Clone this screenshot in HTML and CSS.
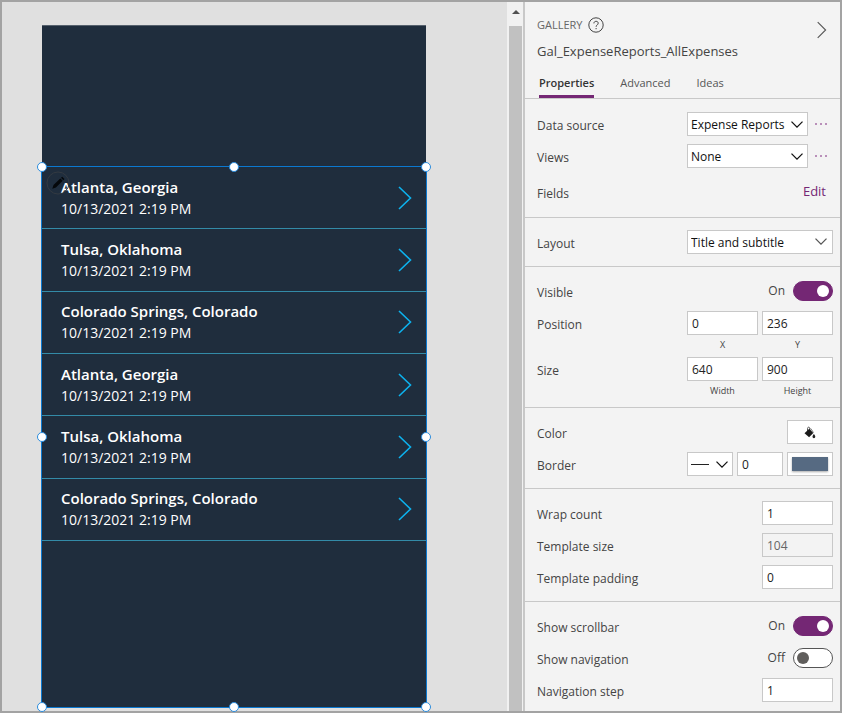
FILE: index.html
```html
<!DOCTYPE html>
<html lang="en">
<head>
<meta charset="utf-8">
<meta name="viewport" content="width=device-width, initial-scale=1">
<title>Gal_ExpenseReports_AllExpenses</title>
<link rel="stylesheet" href="styles.css">
</head>
<body>
<svg class="defs" aria-hidden="true">
  <symbol id="next" viewBox="0 0 14 24"><path d="M1 1l11.500 11L1 23" fill="none" stroke="currentColor" stroke-width="1.600"/></symbol>
  <symbol id="down" viewBox="0 0 12 7"><path d="M.5 .6L6 6.1 11.500 .6" fill="none" stroke="currentColor" stroke-width="1.3"/></symbol>
</svg>
<div class="studio">
  <main class="canvas">
    <div class="screen">
      <div class="screen-header"></div>
      <section class="gallery" aria-label="Expense reports">
        <ul class="items">
          <li class="item"><div><div class="title">Atlanta, Georgia</div><div class="subtitle">10/13/2021 2:19 PM</div></div><svg class="next"><use href="#next"/></svg></li>
          <li class="item"><div><div class="title">Tulsa, Oklahoma</div><div class="subtitle">10/13/2021 2:19 PM</div></div><svg class="next"><use href="#next"/></svg></li>
          <li class="item"><div><div class="title">Colorado Springs, Colorado</div><div class="subtitle">10/13/2021 2:19 PM</div></div><svg class="next"><use href="#next"/></svg></li>
          <li class="item"><div><div class="title">Atlanta, Georgia</div><div class="subtitle">10/13/2021 2:19 PM</div></div><svg class="next"><use href="#next"/></svg></li>
          <li class="item"><div><div class="title">Tulsa, Oklahoma</div><div class="subtitle">10/13/2021 2:19 PM</div></div><svg class="next"><use href="#next"/></svg></li>
          <li class="item"><div><div class="title">Colorado Springs, Colorado</div><div class="subtitle">10/13/2021 2:19 PM</div></div><svg class="next"><use href="#next"/></svg></li>
        </ul>
        <svg class="pencil" viewBox="0 0 24 24" aria-hidden="true">
          <circle cx="12" cy="12" r="11" fill="none" stroke="#333a42" stroke-width="1"/>
          <path d="M6.300 17.700l1.200-3.700 6.800-6.600 2.400 2.400-6.800 6.700zM15 6.800l1.200-1 2.300 2.200-1.100 1.200z" fill="#05080b"/>
        </svg>
        <i class="handle top left"></i><i class="handle top center"></i><i class="handle top right"></i>
        <i class="handle middle left"></i><i class="handle middle right"></i>
        <i class="handle bottom left"></i><i class="handle bottom center"></i><i class="handle bottom right"></i>
      </section>
    </div>
  </main>
  <div class="scrollbar" aria-hidden="true">
    <svg class="scroll-up" viewBox="0 0 8 4"><path d="M0 4l4-4 4 4z" fill="#505050"/></svg>
    <div class="thumb"></div>
  </div>
  <aside class="panel">
    <header class="panel-header">
      <div class="heading">
        <div>
          <div class="kind">GALLERY
            <button class="plain" aria-label="Help"><svg class="help" viewBox="0 0 16 16" fill="none" stroke="#444"><circle cx="8" cy="8" r="7.200"/><path d="M5.900 6.400c0-1.300.9-2.100 2.200-2.100s2.100.8 2.100 1.900c0 1.700-2.100 1.800-2.100 3.600"/><path d="M8.100 11v1.200"/></svg></button>
          </div>
          <h1 class="name">Gal_ExpenseReports_AllExpenses</h1>
        </div>
        <button class="plain collapse" aria-label="Collapse"><svg viewBox="0 0 10 18"><path d="M.7 1.200L8.600 9 .7 16.800" fill="none" stroke="#555" stroke-width="1.100"/></svg></button>
      </div>
      <nav class="tabs">
        <button class="tab active">Properties</button>
        <button class="tab">Advanced</button>
        <button class="tab">Ideas</button>
      </nav>
    </header>

    <section class="group first">
      <div class="row"><label for="source">Data source</label>
        <div class="controls"><span class="select"><select id="source"><option>Expense Reports</option></select><svg class="down"><use href="#down"/></svg></span>
        <button class="plain more" aria-label="Data source options"><svg viewBox="0 0 12 2"><path d="M0 0h2v2H0zM5 0h2v2H5zM10 0h2v2h-2z" fill="#b98fb9"/></svg></button></div></div>
      <div class="row"><label for="views">Views</label>
        <div class="controls"><span class="select"><select id="views"><option>None</option></select><svg class="down"><use href="#down"/></svg></span>
        <button class="plain more" aria-label="View options"><svg viewBox="0 0 12 2"><path d="M0 0h2v2H0zM5 0h2v2H5zM10 0h2v2h-2z" fill="#b98fb9"/></svg></button></div></div>
      <div class="row tall"><span class="label">Fields</span><a class="edit" href="#fields">Edit</a></div>
    </section>

    <section class="group">
      <div class="row"><label for="layout">Layout</label>
        <div class="controls"><span class="select light"><select id="layout"><option>Title and subtitle</option></select><svg class="down"><use href="#down"/></svg></span></div></div>
    </section>

    <section class="group">
      <div class="row"><label for="visible">Visible</label>
        <div class="controls end"><span class="state">On</span><input class="toggle" id="visible" type="checkbox" role="switch" checked></div></div>
      <div class="row"><span class="label">Position</span>
        <div class="controls">
          <div class="field"><input id="x" type="text" value="0"><label class="caption" for="x">X</label></div>
          <div class="field"><input id="y" type="text" value="236"><label class="caption" for="y">Y</label></div>
        </div></div>
      <div class="row"><span class="label">Size</span>
        <div class="controls">
          <div class="field"><input id="width" type="text" value="640"><label class="caption" for="width">Width</label></div>
          <div class="field"><input id="height" type="text" value="900"><label class="caption" for="height">Height</label></div>
        </div></div>
    </section>

    <section class="group">
      <div class="row"><span class="label">Color</span>
        <div class="controls end"><button class="box third" aria-label="Fill color">
          <svg class="bucket" viewBox="0 0 12 13"><path d="M3.500 5.200V2.400C3.500 1 5.500 .6 5.700 2.200v3" fill="none" stroke="#555"/><path d="M.5 7.300L5.300 2.800l4 4.200-4.200 4.200z" fill="#1b1b1b"/><path d="M6.600 2.400l2.900 4.200" stroke="#777" fill="none"/><path d="M9.900 8c.9 1.300 1.400 2 1.400 2.800a1.400 1.400 0 0 1-2.800 0c0-.8.5-1.500 1.400-2.800z" fill="#222"/></svg>
        </button></div></div>
      <div class="row"><label for="border-width">Border</label>
        <div class="controls">
          <button class="box third style" aria-label="Border style"><span class="line"></span><svg class="chevron"><use href="#down"/></svg></button>
          <input class="third" id="border-width" type="text" value="0">
          <button class="box third" aria-label="Border color"><span class="swatch"></span></button>
        </div></div>
    </section>

    <section class="group">
      <div class="row"><label for="wrap">Wrap count</label><div class="controls end"><input class="half" id="wrap" type="text" value="1"></div></div>
      <div class="row"><label for="tsize">Template size</label><div class="controls end"><input class="half" id="tsize" type="text" value="104" disabled></div></div>
      <div class="row"><label for="tpad">Template padding</label><div class="controls end"><input class="half" id="tpad" type="text" value="0"></div></div>
    </section>

    <section class="group">
      <div class="row"><label for="scroll">Show scrollbar</label>
        <div class="controls end"><span class="state">On</span><input class="toggle" id="scroll" type="checkbox" role="switch" checked></div></div>
      <div class="row"><label for="nav">Show navigation</label>
        <div class="controls end"><span class="state">Off</span><input class="toggle" id="nav" type="checkbox" role="switch"></div></div>
      <div class="row"><label for="step">Navigation step</label><div class="controls end"><input class="half" id="step" type="text" value="1"></div></div>
    </section>
  </aside>
</div>
</body>
</html>
```
FILE: styles.css
```css
* { box-sizing: border-box; }
body {
  margin: 0;
  font-family: "Open Sans", "Noto Sans", sans-serif;
  font-size: 12px;
  line-height: 16px;
  color: #444;
}
button, input, select { font: inherit; color: #222; margin: 0; }
.defs { display: none; }

.studio {
  display: flex;
  min-height: 100vh;
  border: 2px solid #a3a3a3;
  background: #e0e0e0;
}

/* Canvas */
.canvas { flex: 1; display: flex; min-width: 0; padding: 23px 81px 3px 40px; }
.screen {
  flex: 1;
  display: flex;
  flex-direction: column;
  background: #1f2d3d;
  border-top: 1px solid #56616d;
}
.screen-header { height: 140px; }
.gallery {
  position: relative;
  flex: 1;
  margin: 0 -1px 0 -1px;
  border: 1px solid #0b78d0;
}
.items {
  display: grid;
  grid-auto-rows: 1fr;
  height: 374px;
  margin: 0;
  padding: 0;
  list-style: none;
}
.item {
  display: flex;
  align-items: center;
  justify-content: space-between;
  padding: 0 14px 0 19px;
  border-bottom: 1px solid #338ba8;
  color: #fff;
}
.title { font-size: 15px; line-height: 22px; font-weight: 600; }
.subtitle { font-size: 14px; line-height: 22px; }
.next { width: 14px; height: 24px; color: #0db2ee; }
.pencil { position: absolute; top: 4px; left: 4px; width: 24px; height: 24px; }
.handle {
  position: absolute;
  width: 10px;
  height: 10px;
  border: 1px solid #2a8bdc;
  border-radius: 50%;
  background: #fff;
}
.handle.top { top: -5px; }
.handle.middle { top: calc(50% - 5px); }
.handle.bottom { bottom: -5px; }
.handle.left { left: -5px; }
.handle.center { left: calc(50% - 5px); }
.handle.right { right: -5px; }

/* Scrollbar */
.scrollbar {
  display: flex;
  flex-direction: column;
  align-items: center;
  width: 16px;
  padding: 0 1px 0 2px;
  background: #f1f1f1;
}
.scroll-up { width: 8px; height: 4px; margin: 8px 0 12px; }
.thumb { flex: 1; width: 100%; background: #c1c1c1; }

/* Property panel */
.panel { width: 317px; border-left: 2px solid #c8c8c8; background: #f3f3f3; }
.panel-header { border-bottom: 1px solid #c8c8c8; padding: 13px 12px 0; }
.heading { display: flex; justify-content: space-between; align-items: flex-start; }
.kind { display: flex; align-items: center; gap: 5px; height: 20px; font-size: 11px; color: #666; }
.plain { display: block; padding: 0; border: 0; background: none; }
.plain svg { display: block; }
.help { width: 16px; height: 16px; }
.name { margin: 5px 0 0; font-size: 13px; line-height: 22px; font-weight: 400; color: #444; }
.collapse { margin: 6px 1px 0 0; }
.collapse svg { width: 10px; height: 18px; }
.tabs { display: flex; gap: 26px; margin-top: 12px; padding-left: 2px; }
.tab {
  height: 24px;
  padding: 0 0 4px;
  border: 0;
  border-bottom: 3px solid transparent;
  background: none;
  font-size: 11px;
  line-height: 16px;
  color: #555;
}
.tab.active { border-color: #742774; font-weight: 600; color: #333; }

.group {
  display: flex;
  flex-direction: column;
  gap: 8px;
  padding: 12px 7px 12px 12px;
  border-bottom: 1px solid #c8c8c8;
}
.group.first { padding-top: 13px; }
.group:last-child { border-bottom: 0; padding-bottom: 7px; }
.row { display: flex; justify-content: space-between; align-items: flex-start; min-height: 24px; }
.row > label, .row > .label { padding-top: 6px; }
.row.tall { min-height: 29px; align-items: center; }
.edit { margin-right: 7px; font-size: 13px; color: #742774; text-decoration: none; }
.controls { display: flex; align-items: center; gap: 4px; width: 146px; }
.controls.end { justify-content: flex-end; }

input[type="text"], select, .box {
  width: 100%;
  height: 24px;
  padding: 0 4px;
  border: 1px solid #c8c8c8;
  border-radius: 0;
  background: #fff;
}
input[type="text"]:disabled { background: #f3f3f3; color: #666; }
.select { position: relative; flex: 1; }
.select select { display: block; appearance: none; padding: 1px 3px 0; color: #111; }
.down { position: absolute; top: 9px; right: 5px; width: 12px; height: 7px; color: #111; pointer-events: none; }
.light .down { right: 6px; top: 8px; color: #555; }
.more { width: 21px; padding-left: 3px; }
.more svg { width: 12px; height: 2px; }
.field { flex: 1; min-width: 0; }
.field input { display: block; }
.caption { display: block; height: 14px; padding-top: 3px; font-size: 9px; line-height: 14px; text-align: center; }
.controls .half { width: 71px; }
.controls .third { width: 46px; }
.box { display: flex; align-items: center; justify-content: center; }
.style { justify-content: space-between; padding: 0 4px 0 3px; }
.line { width: 18px; height: 1px; background: #222; }
.chevron { width: 12px; height: 7px; color: #111; }
.swatch { width: 36px; height: 14px; flex: none; background: #566a82; box-shadow: 0 1px 2px #aaa; }
.bucket { width: 12px; height: 13px; }

.state { margin-right: 4px; }
.toggle {
  appearance: none;
  display: flex;
  align-items: center;
  width: 40px;
  height: 20px;
  padding: 0 3px;
  border: 1px solid #555;
  border-radius: 10px;
  background: #fff;
}
.toggle::before { content: ""; width: 12px; height: 12px; border-radius: 50%; background: #605e5c; }
.toggle:checked { justify-content: flex-end; border-color: #742774; background: #742774; }
.toggle:checked::before { background: #fff; }
.row:has(.toggle) .controls { height: 24px; }
```
